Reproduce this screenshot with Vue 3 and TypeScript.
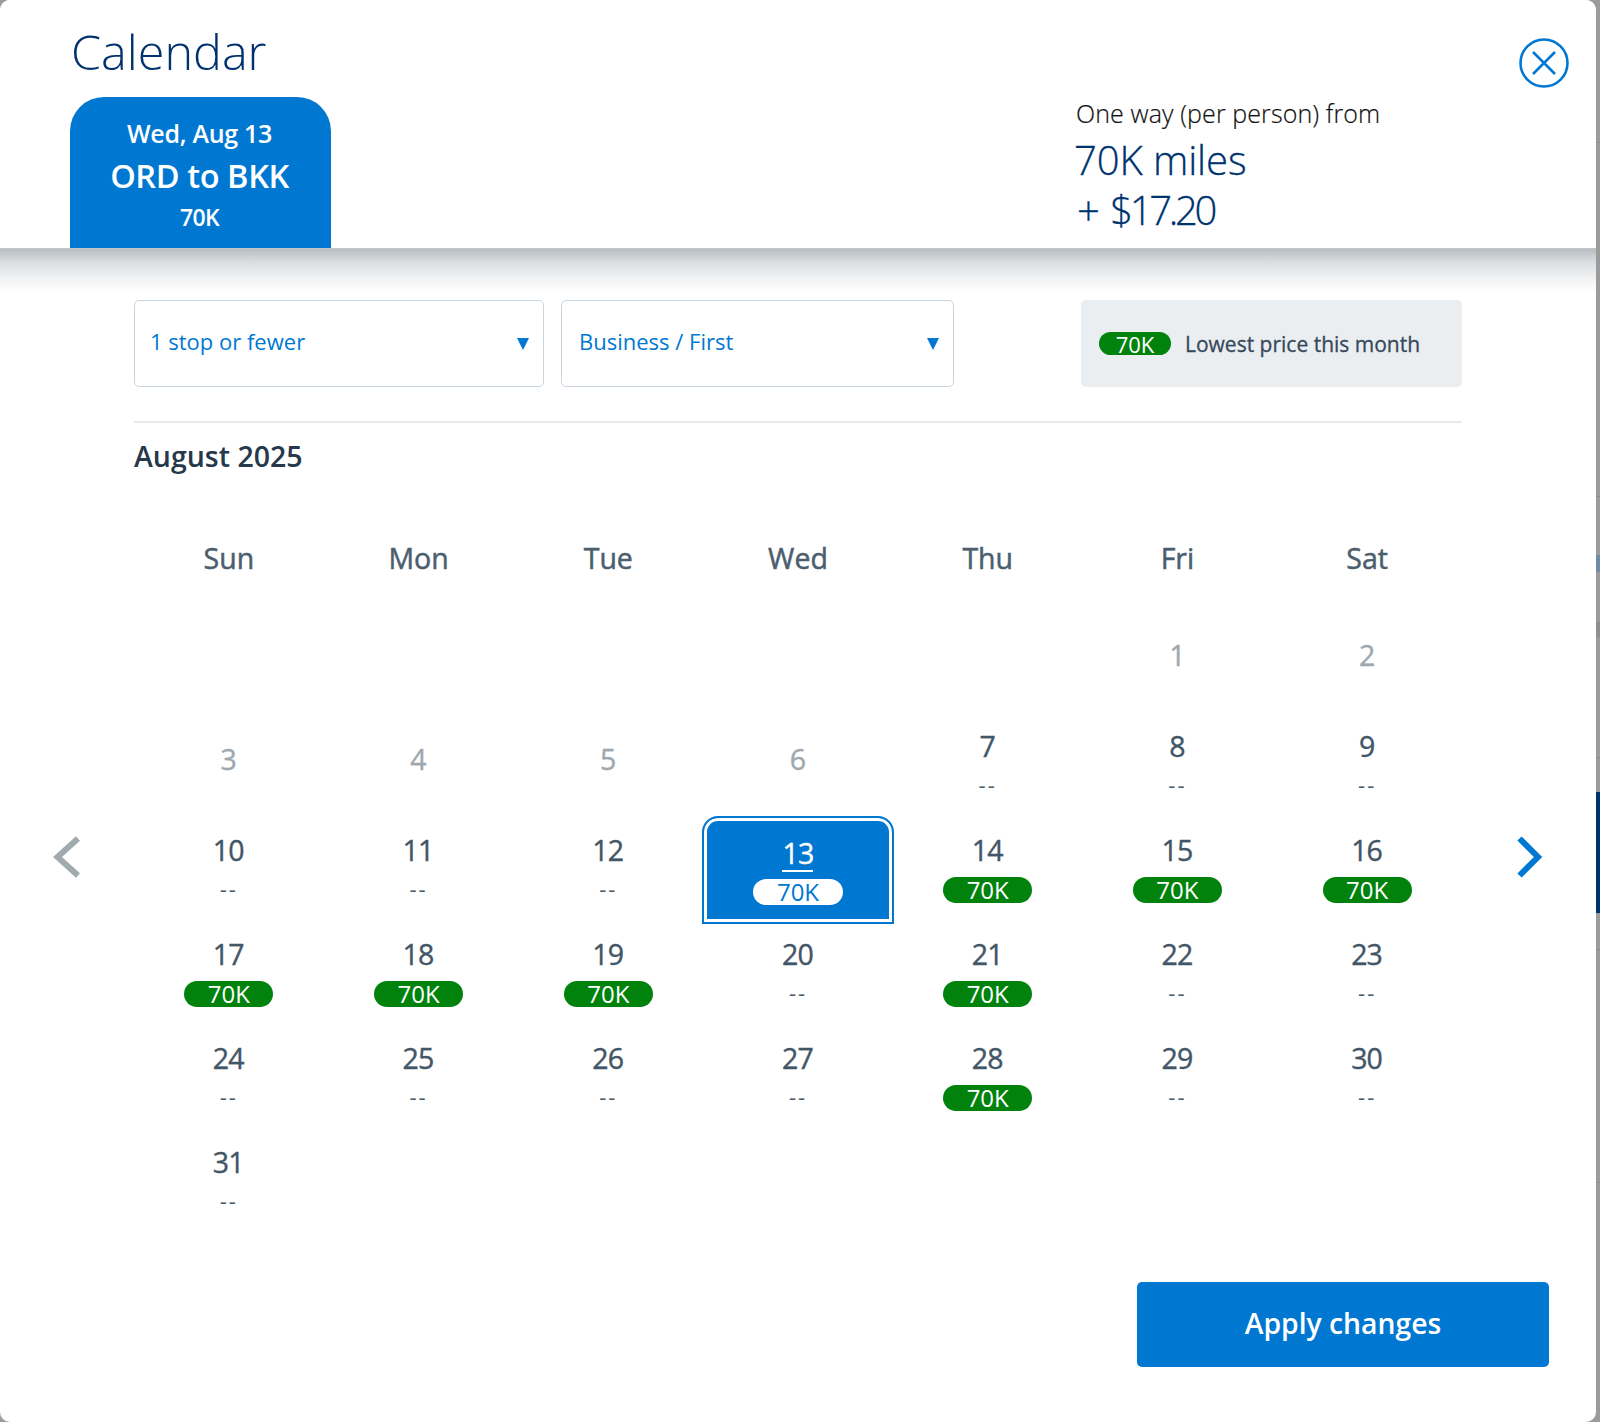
<script setup lang="ts">
interface Cell { day: number; price: string; muted: boolean; selected: boolean }
const lowDays = [13, 14, 15, 16, 17, 18, 19, 21, 28]
const weekdays = ['Sun', 'Mon', 'Tue', 'Wed', 'Thu', 'Fri', 'Sat']
const blanks = [1, 2, 3, 4, 5]
const cells: Cell[] = Array.from({ length: 31 }, (_, i) => {
  const day = i + 1
  return {
    day,
    muted: day < 7,
    selected: day === 13,
    price: lowDays.includes(day) ? '70K' : '--',
  }
})
</script>

<template>
  <div class="page">
    <div class="modal">
      <header class="head">
        <div class="head-left">
          <h1 class="title">Calendar</h1>
          <div class="tab">
            <div class="tab-date">Wed, Aug 13</div>
            <div class="tab-route">ORD to BKK</div>
            <div class="tab-price">70K</div>
          </div>
        </div>
        <div class="fare">
          <div class="fare-label">One way (per person) from</div>
          <div class="fare-amount fare-miles">70K miles</div>
          <div class="fare-amount fare-cash">+ <span class="fare-tight">$17.20</span></div>
        </div>
        <svg class="close" viewBox="0 0 50 50" width="50" height="50" aria-label="Close">
          <circle cx="25" cy="25" r="23.5" fill="none" stroke="#0078d2" stroke-width="2.6" />
          <path d="M14 14 L36 36 M36 14 L14 36" fill="none" stroke="#0078d2" stroke-width="2.6" />
        </svg>
      </header>

      <main class="body">
        <div class="filters">
          <div class="select select-a">
            <span>1 stop or fewer</span>
            <i class="caret"></i>
          </div>
          <div class="select select-b">
            <span>Business / First</span>
            <i class="caret"></i>
          </div>
          <div class="legend">
            <span class="pill legend-pill">70K</span>
            <span class="legend-text">Lowest price this month</span>
          </div>
        </div>
        <div class="rule"></div>
        <h2 class="month">August 2025</h2>

        <div class="calendar">
          <div class="nav">
            <svg viewBox="0 0 28 42" width="28" height="42">
              <path d="M26 2.5 L5.5 21 L26 39.5" fill="none" stroke="#a1aaae" stroke-width="6" />
            </svg>
          </div>
          <div class="sheet">
            <div class="weekdays">
              <div v-for="w in weekdays" :key="w" class="weekday">{{ w }}</div>
            </div>
            <div class="grid">
              <div v-for="b in blanks" :key="b" class="blank"></div>
              <div
                v-for="c in cells"
                :key="c.day"
                class="cell"
                :class="{ 'is-muted': c.muted, 'is-selected': c.selected }"
              >
                <span class="date">{{ c.day }}</span>
                <template v-if="!c.muted">
                  <span v-if="c.price === '70K'" class="pill">{{ c.price }}</span>
                  <span v-else class="none">{{ c.price }}</span>
                </template>
              </div>
            </div>
          </div>
          <div class="nav nav-next">
            <svg viewBox="0 0 28 42" width="28" height="42">
              <path d="M3.5 2.5 L22 21 L3.5 39.5" fill="none" stroke="#0078d2" stroke-width="6" />
            </svg>
          </div>
        </div>

        <div class="actions">
          <button class="apply" type="button">Apply changes</button>
        </div>
      </main>
    </div>
    <div class="edge"></div>
  </div>
</template>

<style scoped>
.page {
  width: 1600px;
  height: 1422px;
  display: flex;
  background: #9b9b9b;
  font-family: "Open Sans", "Noto Sans", sans-serif;
  overflow: hidden;
}
.modal {
  width: 1596px;
  height: 1422px;
  background: #fff;
  border-radius: 10px;
  overflow: hidden;
  flex: none;
}
.edge {
  width: 4px;
  flex: none;
  background: linear-gradient(
    to bottom,
    #9b9b9b 0 142px, #8a8a8a 142px 143px,
    #9b9b9b 143px 496px, #8a8a8a 496px 497px,
    #9b9b9b 497px 555px, #6f8ba6 555px 572px,
    #9b9b9b 572px 622px, #8e8e8e 622px 637px,
    #9b9b9b 637px 757px, #8a8a8a 757px 758px,
    #9b9b9b 758px 792px, #00336e 792px 913px,
    #9b9b9b 913px 949px, #8a8a8a 949px 950px,
    #9b9b9b 950px 1182px, #8a8a8a 1182px 1183px,
    #9b9b9b 1183px
  );
}
.head {
  height: 249px;
  display: flex;
  align-items: flex-start;
  background: #fff;
  border-bottom: 1px solid #c2c7cb;
  box-sizing: border-box;
  padding-left: 70px;
}
.head-left {
  width: 261px;
}
.title {
  margin: 0 0 0 1px;
  height: 97px;
  font-size: 48.5px;
  line-height: 102px;
  font-weight: 300;
  color: #00336e;
}
.tab {
  height: 151px;
  box-sizing: border-box;
  padding-top: 20px;
  background: #0078d2;
  color: #fff;
  border-radius: 34px 34px 0 0;
  text-align: center;
  padding-right: 2px;
}
.tab-date {
  font-size: 25px;
  line-height: 32px;
  font-weight: 600;
  letter-spacing: -0.3px;
}
.tab-route {
  font-size: 32.5px;
  line-height: 44px;
  margin-top: 5px;
  font-weight: 600;
  letter-spacing: -0.4px;
}
.tab-price {
  font-size: 23px;
  line-height: 28px;
  margin-top: 5px;
  font-weight: 600;
  letter-spacing: -0.6px;
}
.fare {
  margin-left: 745px;
  padding-top: 97px;
}
.fare-label {
  font-size: 25px;
  line-height: 32px;
  color: #111;
  letter-spacing: 0.1px;
  font-weight: 300;
  -webkit-text-stroke: 0.2px #111;
}
.fare-amount {
  font-size: 40px;
  line-height: 50px;
  color: #00336e;
  font-weight: 300;
  -webkit-text-stroke: 0.3px #00336e;
}
.fare-miles {
  margin-top: 6px;
  margin-left: -2px;
  letter-spacing: -0.1px;
}
.fare-cash {
  margin-left: 1px;
}
.fare-tight {
  letter-spacing: -3.3px;
}
.close {
  margin: 38px 27px 0 auto;
  flex: none;
}
.body {
  padding: 51px 134px 0;
  height: 1173px;
  box-sizing: border-box;
  background: linear-gradient(to bottom, #b7bcc0 0, #d9dcdf 12px, #f2f3f4 30px, #fff 44px) no-repeat top / 100% 44px;
}
.filters {
  display: flex;
  height: 87px;
}
.select {
  display: flex;
  align-items: center;
  justify-content: space-between;
  box-sizing: border-box;
  height: 87px;
  border: 1px solid #c8d5e0;
  border-radius: 5px;
  padding: 0 14px 6px 15px;
  color: #0078d2;
  font-size: 22px;
  background: #fff;
}
.select-a {
  width: 410px;
}
.select-b {
  width: 393px;
  margin-left: 17px;
  padding-left: 17px;
}
.caret {
  width: 0;
  height: 0;
  margin-top: 6px;
  border-left: 6.5px solid transparent;
  border-right: 6.5px solid transparent;
  border-top: 12px solid #0078d2;
}
.legend {
  width: 381px;
  margin-left: 127px;
  background: #ebeef1;
  border-radius: 5px;
  display: flex;
  align-items: center;
  padding-left: 18px;
  box-sizing: border-box;
}
.legend-text {
  margin-left: 14px;
  font-size: 21px;
  color: #36495a;
  font-weight: 400;
  -webkit-text-stroke: 0.3px #36495a;
}
.rule {
  height: 2px;
  margin-top: 34px;
  background: #e6eaee;
}
.month {
  margin: 0;
  height: 68px;
  font-size: 28.5px;
  line-height: 66px;
  font-weight: 600;
  color: #26384a;
}
.calendar {
  display: flex;
  margin: 0 -134px;
}
.nav {
  width: 134px;
  flex: none;
  padding-top: 345px;
  padding-left: 52px;
  box-sizing: border-box;
}
.nav-next {
  padding-left: 54px;
}
.sheet {
  width: 1328px;
  flex: none;
}
.weekdays {
  display: grid;
  grid-template-columns: repeat(7, 1fr);
  height: 112px;
  box-sizing: border-box;
  padding-top: 37px;
}
.weekday {
  text-align: center;
  font-size: 28.5px;
  line-height: 60px;
  color: #4b5e6e;
  -webkit-text-stroke: 0.5px #4b5e6e;
}
.grid {
  display: grid;
  grid-template-columns: repeat(7, 1fr);
  grid-auto-rows: 104px;
}
.cell {
  display: flex;
  flex-direction: column;
  align-items: center;
  color: #425667;
}
.date {
  font-size: 28.5px;
  line-height: 38px;
  margin-top: 20px;
  margin-right: 1px;
  letter-spacing: -0.8px;
  -webkit-text-stroke: 0.4px currentColor;
}
.none {
  height: 26px;
  margin-top: 6px;
  font-size: 22px;
  line-height: 26px;
  letter-spacing: 2px;
  color: #4b5e6e;
}
.pill {
  display: flex;
  align-items: center;
  justify-content: center;
  width: 89px;
  height: 26px;
  margin-top: 8px;
  border-radius: 13px;
  background: #00820c;
  color: #fff;
  font-size: 24px;
  line-height: 26px;
}
.legend .legend-pill {
  width: 72px;
  height: 23px;
  margin-top: 0;
  font-size: 22px;
}
.is-muted {
  justify-content: center;
  color: #9ea8ae;
}
.is-muted .date {
  margin-top: 0;
}
.is-selected {
  box-sizing: border-box;
  margin: 5px -1px -9px;
  background: #0078d2;
  border: 2px solid #0078d2;
  box-shadow: inset 0 0 0 3px #fff;
  border-radius: 16px 16px 0 0;
  color: #fff;
}
.is-selected .date {
  margin-top: 18px;
  line-height: 34px;
  height: 34px;
  margin-right: 0;
  border-bottom: 2px solid #fff;
}
.is-selected .pill {
  margin-top: 7px;
  background: #fff;
  color: #0078d2;
  width: 90px;
}
.actions {
  display: flex;
  justify-content: flex-end;
  margin: 0 -87px 0 0;
  padding-top: 55px;
}
.apply {
  width: 412px;
  height: 85px;
  border: 0;
  border-radius: 5px;
  background: #0078d2;
  color: #fff;
  font-family: inherit;
  font-size: 28.3px;
  font-weight: 600;
  padding: 0 0 4px;
}
</style>
